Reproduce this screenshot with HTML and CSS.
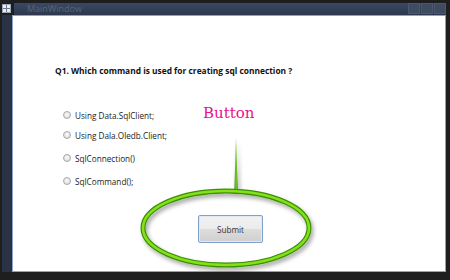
FILE: index.html
```html
<!DOCTYPE html>
<html lang="en">
<head>
  <meta charset="UTF-8" />
  <title>MainWindow</title>
  <link rel="stylesheet" href="styles.css">
</head>
<body>
  <div class="frame">
    <!-- barra de título -->
    <div class="titlebar">
      <div class="app-icon"><span></span><span></span><span></span><span></span></div>
      <div class="caption">
        <span class="caption-text">MainWindow</span>
        <div class="caption-buttons">
          <span class="cap-btn"></span>
          <span class="cap-btn"></span>
          <span class="cap-btn"></span>
        </div>
      </div>
    </div>

    <div class="body-row">
      <div class="side-strip"></div>
      <div class="client">
        <p class="question">Q1. Which command is used for creating sql connection ?</p>

        <ul class="options">
          <li class="opt opt-1"><span class="radio"></span>Using Data.SqlClient;</li>
          <li class="opt opt-2"><span class="radio"></span>Using Dala.Oledb.Client;</li>
          <li class="opt opt-3"><span class="radio"></span>SqlConnection()</li>
          <li class="opt opt-4"><span class="radio"></span>SqlCommand();</li>
        </ul>

        <div class="actions">
          <button class="btn-submit">Submit</button>
        </div>

        <!-- anotación encima del contenido -->
        <span class="callout-label">Button</span>
        <svg class="callout" width="432" height="256" viewBox="0 0 432 256">
          <defs>
            <filter id="shadow" x="-20%" y="-20%" width="140%" height="150%">
              <feDropShadow dx="2" dy="3" stdDeviation="2" flood-color="#000" flood-opacity="0.35" />
            </filter>
            <linearGradient id="stem" x1="0" x2="1" y1="0" y2="0">
              <stop offset="0" stop-color="#2f8a10" />
              <stop offset="0.5" stop-color="#7ccf2a" />
              <stop offset="1" stop-color="#2f8a10" />
            </linearGradient>
          </defs>
          <g filter="url(#shadow)">
            <polygon points="223,122 221.2,178 225,178" fill="url(#stem)" />
            <ellipse cx="213" cy="212" rx="83" ry="37" fill="none" stroke="#3a9000" stroke-width="5" />
            <ellipse cx="213" cy="212" rx="83" ry="37" fill="none" stroke="#84e01c" stroke-width="2.6" />
          </g>
        </svg>
      </div>
    </div>
  </div>
</body>
</html>
```

FILE: styles.css
```css
/* ===== Ventana ===== */
body {
  margin: 0;
  width: 450px;
  height: 280px;
  background-color: #1e1e1e;
  font-family: "Open Sans", "DejaVu Sans", sans-serif;
  overflow: hidden;
}
.frame {
  margin: 3px 4px 0 2px;
}
.titlebar {
  display: flex;
  height: 12px;
}
.app-icon {
  width: 7px;
  height: 7px;
  margin: 1px 3px 0 0;
  display: grid;
  grid-template-columns: 1fr 1fr;
  gap: 1px;
  background-color: #6f7a8c;
  border: 1px solid #9aa6b8;
}
.app-icon span {
  background-color: #e8edf4;
}
.caption {
  flex: 1;
  display: flex;
  align-items: center;
  background: linear-gradient(#3a4862, #2c384e);
  padding-left: 13px;
}
.caption-text {
  flex: 1;
  font-size: 9px;
  color: #5b6578;
  line-height: 12px;
}
.caption-buttons {
  display: flex;
  align-self: stretch;
}
.cap-btn {
  width: 12px;
  height: 11px;
  margin-left: 1px;
  background-color: #3f4b60;
  border: 1px solid #4c586c;
  box-sizing: border-box;
}

.body-row {
  display: flex;
}
.side-strip {
  width: 10px;
  background-color: #2a3346;
}
.client {
  position: relative;
  flex: 1;
  height: 255px;
  background-color: #fff;
  border: 1px solid #8ba2cc;
  border-top-width: 1px;
}

/* ===== Pregunta ===== */
.question {
  margin: 49px 0 0 42px;
  font-size: 8.4px;
  font-weight: bold;
  color: #111;
}

/* ===== Opciones ===== */
.options {
  list-style: none;
  margin: 0;
  padding: 0 0 0 50px;
}
.opt {
  display: flex;
  align-items: center;
  gap: 4px;
  height: 12px;
  font-size: 8.2px;
  color: #222;
}
.opt-1 { margin-top: 33px; }
.opt-2 { margin-top: 8px; }
.opt-3 { margin-top: 11px; }
.opt-4 { margin-top: 11px; }
.radio {
  width: 8px;
  height: 8px;
  border-radius: 50%;
  border: 1px solid #a7a7a7;
  background: radial-gradient(circle at 50% 40%, #fbfbfb, #d6d6d6);
  box-sizing: border-box;
}

/* ===== Botón ===== */
.actions {
  display: flex;
  justify-content: center;
  margin-top: 28px;
  padding-left: 3px;
}
.btn-submit {
  width: 65px;
  height: 28px;
  font-family: inherit;
  font-size: 8.2px;
  color: #3a3434;
  border: 1px solid #7da2ce;
  border-radius: 2px;
  background: linear-gradient(#f2f2f2 0%, #ebebeb 50%, #dddddd 51%, #cfcfcf 100%);
  box-shadow: inset 0 0 0 1px #dfe9f5;
}

/* ===== Anotación ===== */
.callout {
  position: absolute;
  left: 0;
  top: 0;
  pointer-events: none;
}
.callout-label {
  position: absolute;
  left: 190px;
  top: 88px;
  font-family: "DejaVu Serif", "Liberation Serif", serif;
  font-size: 15px;
  color: #e8108c;
}
```
